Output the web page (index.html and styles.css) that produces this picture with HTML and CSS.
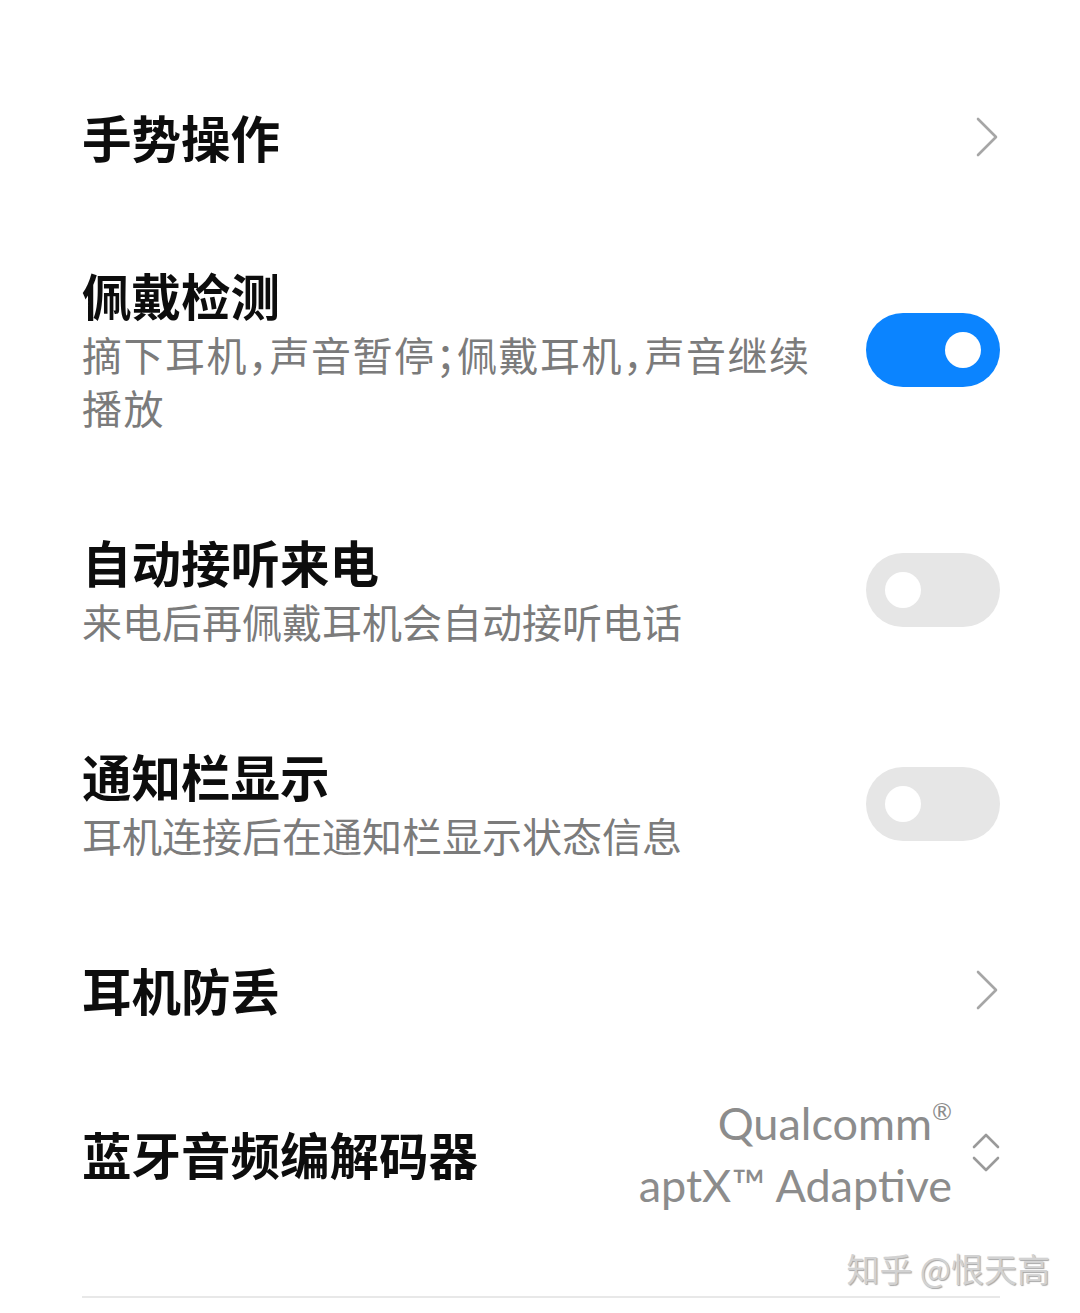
FILE: index.html
```html
<!DOCTYPE html>
<html lang="zh-CN">
<head>
  <meta charset="UTF-8">
  <title>耳机设置</title>
  <meta name="viewport" content="width=device-width, initial-scale=1.0">
  <link rel="stylesheet" href="styles.css">
</head>
<body>
  <div class="settings">
    <div class="row">
      <div class="text">
        <div class="title">手势操作</div>
      </div>
      <svg class="chevron" width="24" height="40" viewBox="0 0 24 40">
        <path d="M3 2 L21 20 L3 38" fill="none" stroke="#a6a6a6" stroke-width="2.6" stroke-linecap="round" stroke-linejoin="round"/>
      </svg>
    </div>

    <div class="row">
      <div class="text narrow">
        <div class="title">佩戴检测</div>
        <div class="desc compact">摘下耳机，声音暂停；佩戴耳机，声音继续播放</div>
      </div>
      <div class="switch on"><span class="knob"></span></div>
    </div>

    <div class="row">
      <div class="text">
        <div class="title">自动接听来电</div>
        <div class="desc">来电后再佩戴耳机会自动接听电话</div>
      </div>
      <div class="switch"><span class="knob"></span></div>
    </div>

    <div class="row">
      <div class="text">
        <div class="title">通知栏显示</div>
        <div class="desc">耳机连接后在通知栏显示状态信息</div>
      </div>
      <div class="switch"><span class="knob"></span></div>
    </div>

    <div class="row">
      <div class="text">
        <div class="title">耳机防丢</div>
      </div>
      <svg class="chevron" width="24" height="40" viewBox="0 0 24 40">
        <path d="M3 2 L21 20 L3 38" fill="none" stroke="#a6a6a6" stroke-width="2.6" stroke-linecap="round" stroke-linejoin="round"/>
      </svg>
    </div>

    <div class="row codec-row">
      <div class="text">
        <div class="title">蓝牙音频编解码器</div>
      </div>
      <div class="codec">
        <div class="codec-name">Qualcomm<sup>®</sup><br>aptX™ Adaptive</div>
        <svg class="updown" width="28" height="42" viewBox="0 0 28 42">
          <path d="M2 14 L14 2 L26 14" fill="none" stroke="#9a9a9a" stroke-width="2.6" stroke-linecap="round" stroke-linejoin="round"/>
          <path d="M2 25 L14 37 L26 25" fill="none" stroke="#9a9a9a" stroke-width="2.6" stroke-linecap="round" stroke-linejoin="round"/>
        </svg>
      </div>
    </div>

    <div class="divider"></div>
  </div>

  <div class="watermark">知乎 @恨天高</div>
</body>
</html>
```

FILE: styles.css
```css
body {
  margin: 0;
  background: #fff;
  font-family: "Noto Sans CJK SC", "Noto Sans", sans-serif;
}

.settings {
  padding: 58px 80px 0 82px;
}

.row {
  display: flex;
  align-items: center;
  justify-content: space-between;
  padding: 49px 0;
}

.text.narrow {
  max-width: 750px;
}

.title {
  font-size: 49.5px;
  font-weight: 700;
  line-height: 60px;
  color: #0d0d0d;
}

.desc {
  margin-top: 3px;
  font-size: 40px;
  line-height: 53px;
  color: #7b7b7b;
}

/* half-width punctuation like the system font does */
.desc.compact {
  font-feature-settings: "halt";
  letter-spacing: 1.5px;
}

.chevron {
  margin-right: 1px;
}

.switch {
  flex-shrink: 0;
  position: relative;
  width: 134px;
  height: 74px;
  border-radius: 37px;
  background: #e6e6e6;
}

.switch.on {
  background: #0b84ff;
}

.knob {
  position: absolute;
  top: 19px;
  left: 19px;
  width: 36px;
  height: 36px;
  border-radius: 50%;
  background: #fff;
}

.switch.on .knob {
  left: auto;
  right: 19px;
}

.codec-row {
  padding: 23px 0;
}

.codec {
  display: flex;
  align-items: center;
  gap: 20px;
}

.codec-name {
  font-family: Lato, "Open Sans", sans-serif;
  font-size: 45px;
  line-height: 62px;
  text-align: right;
  color: #8c8c8c;
}

.codec-name sup {
  font-size: 24px;
  vertical-align: 20px;
  line-height: 0;
}

.divider {
  margin-top: 57px;
  height: 2px;
  background: #e8e8e8;
}

.watermark {
  position: absolute;
  top: 1244px;
  right: 30px;
  font-size: 33px;
  color: #d2d2d2;
  text-shadow: 1px 1px 1px rgba(0, 0, 0, 0.35);
}
```
